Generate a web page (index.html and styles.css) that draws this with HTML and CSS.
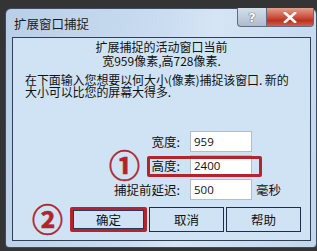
FILE: index.html
```html
<!DOCTYPE html>
<html>
<head>
<meta charset="utf-8">
<link rel="stylesheet" href="styles.css">
</head>
<body>
<div class="window">
  <div class="titlebar">
    <span class="title">扩展窗口捕捉</span>
    <div class="caption">
      <span class="cbtn help">?</span>
      <span class="cbtn close"><svg width="14" height="11" viewBox="0 0 14 11"><path d="M2 1 L12 10 M12 1 L2 10" stroke="#ffffff" stroke-width="2.6" stroke-linecap="square"/></svg></span>
    </div>
  </div>
  <div class="client">
    <div class="head">扩展捕捉的活动窗口当前<br>宽959像素,高728像素.</div>
    <p class="desc">在下面输入您想要以何大小(像素)捕捉该窗口. 新的<br>大小可以比您的屏幕大得多.</p>
    <div class="form">
      <div class="row">
        <span class="label">宽度:</span><span class="input">959</span>
      </div>
      <div class="row">
        <span class="label">高度:</span><span class="input">2400</span>
        <span class="circ circ1">①</span>
        <span class="redbox"></span>
      </div>
      <div class="row">
        <span class="label">捕捉前延迟:</span><span class="input">500</span><span class="unit">毫秒</span>
      </div>
    </div>
    <div class="buttons">
      <span class="circ circ2">②</span>
      <span class="btn ok">确定</span>
      <span class="btn">取消</span>
      <span class="btn">帮助</span>
    </div>
  </div>
</div>
</body>
</html>
```
FILE: styles.css
```css
html, body {
  margin: 0;
  padding: 0;
}
body {
  width: 317px;
  height: 251px;
  overflow: hidden;
  background: #343434;
  font-family: "Noto Sans CJK SC", "Noto Sans", sans-serif;
  font-size: 12px;
  color: #111;
}
.window {
  box-sizing: border-box;
  margin: 8px 0 0 5px;
  width: 312px;
  height: 240px;
  border: 1px solid #3d4c60;
  border-radius: 6px 6px 4px 4px;
  background: linear-gradient(100deg, #b9cfe8 0%, #c9dcf0 45%, #d6e5f5 60%, #c2d6ec 100%);
  padding: 0 4px 0 6px;
  display: flex;
  flex-direction: column;
}
.titlebar {
  height: 28px;
  display: flex;
  align-items: flex-start;
  justify-content: space-between;
}
.title {
  margin-top: 7px;
  margin-left: 2px;
  font-size: 12.5px;
  line-height: 16px;
  color: #1a1a1a;
}
.caption {
  display: flex;
  margin-top: -1px;
  margin-right: -2px;
}
.cbtn {
  height: 19px;
  display: flex;
  align-items: center;
  justify-content: center;
  box-sizing: border-box;
  border: 1px solid #5d6c80;
  border-top: none;
}
.help {
  width: 29px;
  border-radius: 0 0 0 4px;
  border-right: none;
  background: linear-gradient(#d5dfe9, #aebcce);
  color: #ffffff;
  font-family: "DejaVu Sans", sans-serif;
  font-weight: bold;
  font-size: 13px;
  text-shadow: 0 0 1px #3a4a5e, 0 0 1px #3a4a5e;
}
.close {
  width: 48px;
  border-radius: 0 0 4px 0;
  background: linear-gradient(#e3a08f, #cf5a47 45%, #b8321f 70%, #d0614d);
}
.client {
  box-sizing: border-box;
  width: 299px;
  height: 204px;
  border: 1px solid #2f4058;
  background: #d0e3f5;
  display: flex;
  flex-direction: column;
}
.head {
  margin-top: 2px;
  text-align: center;
  line-height: 14px;
  font-size: 12px;
}
.desc {
  margin: 6px 0 0 0;
  padding-left: 12px;
  line-height: 12px;
  font-size: 12px;
  letter-spacing: -0.1px;
}
.form {
  margin-top: 33px;
  display: flex;
  flex-direction: column;
  gap: 3px;
}
.row {
  position: relative;
  height: 21px;
  display: flex;
  align-items: center;
}
.label {
  width: 167px;
  text-align: right;
  font-size: 12.5px;
}
.input {
  box-sizing: border-box;
  margin-left: 10px;
  width: 62px;
  height: 21px;
  background: #ffffff;
  border: 1px solid #b3bdc9;
  padding-left: 3px;
  font-family: "Open Sans", "Noto Sans", sans-serif;
  font-size: 11.5px;
  line-height: 19px;
}
.unit {
  margin-left: 4px;
  font-size: 12.5px;
}
.circ {
  position: absolute;
  color: #b0252c;
  font-family: "Noto Sans CJK SC", sans-serif;
  font-weight: bold;
  font-size: 31px;
  line-height: 25px;
  -webkit-text-stroke: 0.6px #b0252c;
}
.circ1 {
  left: 96px;
  top: -4px;
}
.redbox {
  position: absolute;
  left: 134px;
  top: 1px;
  width: 115px;
  height: 21px;
  box-sizing: border-box;
  border: 3px solid #b5232c;
  border-radius: 2px;
}
.buttons {
  position: relative;
  margin-top: 7px;
  padding-left: 57px;
  display: flex;
  gap: 2px;
}
.circ2 {
  left: 19px;
  top: -2px;
}
.btn {
  box-sizing: border-box;
  width: 75px;
  height: 25px;
  border: 1px solid #1e2f48;
  display: flex;
  align-items: center;
  justify-content: center;
  font-size: 12.5px;
}
.ok {
  width: 77px;
  border: 3px solid #b5232c;
  border-radius: 2px;
  box-shadow: inset 0 0 0 1px #2a3850;
}
```
